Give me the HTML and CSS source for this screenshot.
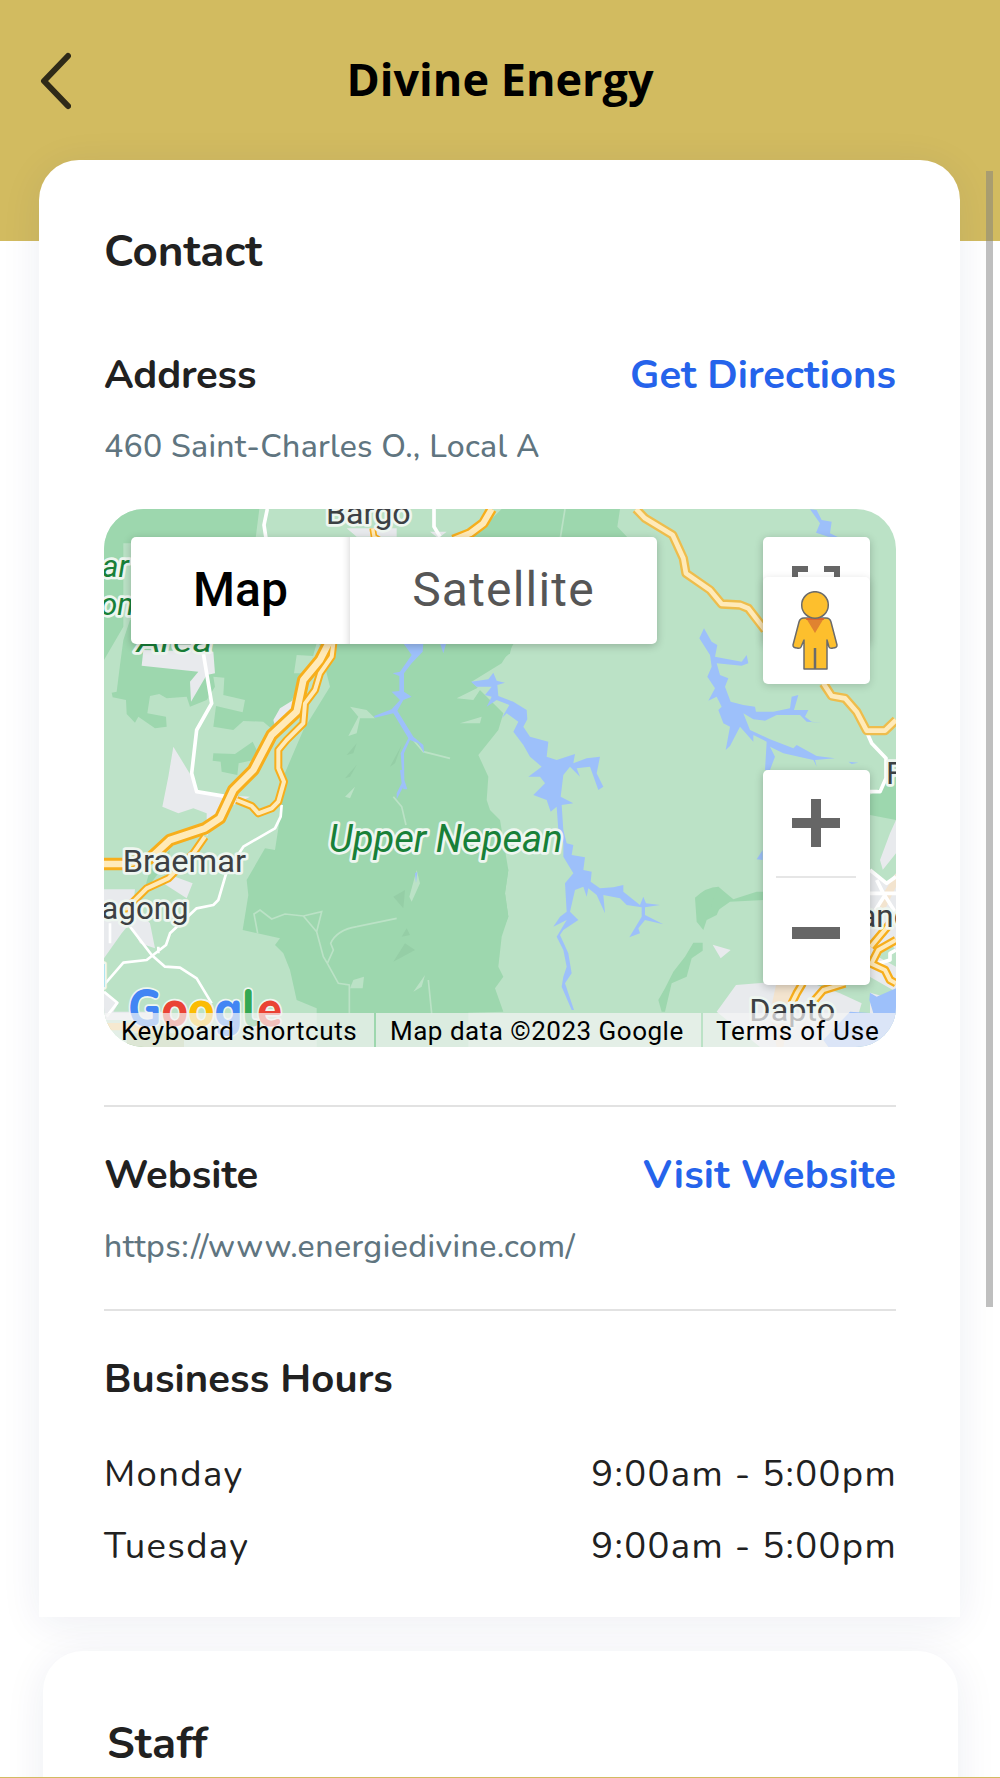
FILE: index.html
```html
<!DOCTYPE html>
<html lang="en">

<head>
    <meta charset="UTF-8">
    <meta name="viewport" content="width=device-width, initial-scale=1.0">
    <title>Divine Energy</title>
    <link rel="stylesheet" href="styles.css">
</head>

<body>
    <header class="header">
        <button class="back" aria-label="Back">
            <svg width="32" height="58" viewBox="0 0 32 58">
                <path d="M29 4 5 29l24 25" fill="none" stroke="#2f2a18" stroke-width="6" stroke-linecap="round" stroke-linejoin="round"/>
            </svg>
        </button>
        <h1>Divine Energy</h1>
    </header>

    <main>
        <section class="card contact">
            <h2>Contact</h2>

            <div class="row address">
                <h3>Address</h3>
                <a class="directions" href="#">Get Directions</a>
            </div>
            <p class="detail street">460 Saint-Charles O., Local A</p>

            <div class="map">
                <svg class="tiles" viewBox="42 27 2376 1614" preserveAspectRatio="none">
                    <rect x="42" y="27" width="2376" height="1614" fill="#bbe2c6"/>
                    <!-- forest -->
                    <g fill="#9dd7ae">
                        <path d="M42 27H508L495 130H100V380L42 480Z"/>
                        <path d="M120 360 100 420 90 495 80 575 65 578 68 592 108 600 110 642 135 668 145 650 195 685 230 680 228 650 172 640 180 588 208 582 230 595 290 590 300 620 350 600 375 560 370 530 403 533 400 585 465 600 458 637 378 618 370 680 430 690 460 663 520 665 560 700 620 640 605 600 660 500 680 430 650 400Z"/>
                        <path d="M370 760 435 762 488 725 512 775 446 790 442 825 395 815 392 785 368 782Z"/>
                        <path d="M680 400H1290L1235 490 1145 545 1240 640 1225 690 1165 765 1195 830 1190 900 1200 930 1230 960 1240 1020 1255 1110 1245 1180 1255 1250 1235 1310 1225 1400 1240 1430 1215 1465 1240 1535 1135 1538V1641H680V1525L620 1500 600 1410 580 1360 555 1335 570 1315 458 1290 475 1185 470 1140 525 1045 555 1050 575 920 580 830 640 690 720 560Z"/>
                        <path d="M1235 27H1590L1582 80 1620 120H1140Z"/>
                        <path d="M1230 1070 1255 1110 1245 1180 1255 1250 1230 1310Z"/>
                        <path d="M1230 440H1265L1260 460 1230 485Z"/>
                        <path d="M1815 1193Q1850 1160 1885 1160L1918 1195 1900 1200 1880 1245 1850 1260 1840 1290 1820 1265ZM1715 1535 1705 1500 1725 1465 1750 1415 1785 1370 1810 1328H1838V1352L1805 1375 1790 1430 1745 1450 1725 1535Z"/>
                        <path d="M1885 1160 1930 1198 2000 1175H2060V1198L1920 1205 1850 1255ZM2340 885 2418 830V960L2340 945Z"/>
                        <path d="M180 1110 240 1050 235 1080 160 1180Z"/>
                    </g>
                    <g fill="#95cea6">
                        <path d="M955 600 1010 545 965 590ZM770 765 800 730 790 760ZM910 1190 945 1170 940 1225ZM910 1385 945 1330 975 1350ZM935 1310 950 1285 960 1305ZM900 800 935 735 915 790ZM765 835 800 795 780 830Z"/>
                    </g>
                    <!-- lighter clearings and tracks -->
                    <g fill="#bbe2c6">
                        <path d="M620 465 670 468 655 520 612 520ZM765 890 795 860 780 895ZM790 1440 822 1430 818 1465 780 1465ZM980 1110 990 1150 965 1205 958 1190ZM970 1475 1005 1425 995 1460ZM1100 595 1180 555 1150 600ZM1110 670 1175 650 1170 670ZM780 620 830 630 855 655 810 655 800 700 775 708 805 650Z"/>
                    </g>
                    <g fill="none" stroke="#bbe2c6" stroke-width="5">
                        <path d="M503 1300 492 1242 510 1230 545 1257 585 1242 640 1248 695 1235 680 1295 640 1248M680 1295 700 1370 712 1390 745 1450 778 1455V1540M712 1390 730 1350 722 1330Q740 1290 800 1280L920 1255M910 890 935 920 948 975M1015 1440 1025 1540M970 720 1000 755 1080 775M1425 27 1410 120"/>
                    </g>
                    <!-- towns -->
                    <g fill="#e8eaed">
                        <path d="M160 450 370 455 375 520 350 525 303 605 300 545 325 515 155 497ZM250 740 305 830 325 880 480 890 400 930 350 1010 350 940 310 925 265 940 217 920 235 830ZM550 660 570 625 610 600 600 660 560 700ZM220 1150 255 1130 308 1150 290 1195ZM42 1168H135L130 1210 180 1270 195 1345 150 1330 120 1270 95 1300 42 1375ZM42 1475 85 1510 70 1535H230V1560H42ZM770 85H920V110H800Z"/>
                        <path d="M1938 1455 2060 1445 2180 1455 2250 1480 2315 1510 2300 1560 2240 1641H2010L1880 1535ZM2370 1080 2400 1000 2418 960V1641H2340V1110L2390 1150ZM1868 1334 1922 1350 1892 1375ZM1020 95 1070 95 1045 115Z"/>
                    </g>
                    <g fill="#f3e4cf">
                        <path d="M2060 1445H2150L2100 1530 2080 1641H2060L2040 1540ZM2380 1180 2418 1120V1160L2350 1300Z"/>
                    </g>
                    <g fill="#bbe2c6">
                        <path d="M2345 1360 2400 1330 2418 1350V1400ZM2330 1425 2418 1475V1500L2330 1475ZM2370 1120 2418 1060V1120L2390 1150Z"/>
                    </g>
                    <!-- rivers and reservoirs -->
                    <g fill="#9dc0fa">
                        <path d="M940 430H1000L998 455 965 490 942 520 942 575 965 590 940 600 922 632 970 710 1000 735 1003 760 985 730 960 720 942 760 943 840 952 868 940 868 932 760 955 715 910 640 855 653 852 648 905 628 930 600 905 575 928 573 928 528 908 520 930 515 965 465ZM1050 430 1068 432 1060 460ZM930 810H940V860L920 898V880L935 850ZM975 1120 982 1115 978 1150Z"/>
                        <path d="M1143 545 1195 538 1210 518 1220 542 1245 548 1222 555 1225 588 1270 605 1310 630 1312 658 1300 680 1320 710 1375 725 1370 770 1400 780 1455 762 1450 790 1490 775 1530 770 1520 820 1540 860 1525 870 1500 800 1460 805 1470 830 1440 800 1420 825 1412 890 1450 910 1415 915 1420 990 1430 1030 1450 1035 1445 1065 1485 1072 1480 1110 1505 1115 1502 1145 1530 1165 1570 1162 1600 1155 1600 1175 1650 1215 1660 1190 1668 1210 1710 1215 1665 1222 1665 1245 1720 1273 1665 1260 1645 1285 1650 1300 1618 1312 1655 1250 1655 1222 1610 1215 1590 1195 1540 1185 1545 1240 1520 1185 1495 1165 1490 1190 1480 1160 1455 1170 1440 1235 1465 1260 1420 1290 1410 1305 1435 1360 1445 1420 1425 1450 1452 1530 1445 1530 1415 1460 1420 1430 1430 1400 1420 1350 1400 1310 1430 1260 1390 1280 1410 1250 1430 1235 1425 1150 1450 1120 1420 1070 1420 1030 1405 990 1400 920 1382 935 1370 900 1330 885 1365 850 1350 830 1315 830 1355 800 1320 770 1300 735 1270 695 1285 665 1250 640 1235 655 1258 615 1220 600 1190 620 1205 590 1185 585 1205 560 1160 560Z"/>
                        <path d="M1842 385 1865 425 1882 435 1875 470 1955 485 1970 465 1975 490 1955 497 1880 490 1890 525 1915 535 1905 560 1922 605 1960 615 1995 620 1998 635 2050 635 2100 625 2105 590 2125 585 2112 630 2155 630 2145 650 2165 665 2195 668 2150 665 2130 645 2100 645 2060 645 2025 662 1990 658 1960 640 1980 690 2040 718 2110 745 2120 735 2180 768 2235 775 2175 780 2180 800 2170 780 2080 760 2040 740 2055 770 2040 810H2025L2030 725 1990 705 1990 725 1950 680 1920 738 1907 750 1920 680 1900 670 1885 630 1895 620 1880 590 1855 602 1875 565 1852 530 1865 500 1860 465 1828 415ZM2160 28 2180 30 2195 60 2225 65 2220 100 2245 112 2215 110 2178 98 2190 70ZM2275 785 2305 788 2285 792ZM2000 1078 2018 1050V1080ZM2338 1500 2340 1478 2360 1490 2418 1465V1641H2215L2200 1620 2280 1535 2350 1540Z"/>
                    </g>
                    <!-- minor roads -->
                    <g fill="none" stroke="#fff" stroke-width="11" stroke-linejoin="round">
                        <path d="M532 27 522 75 528 115M1032 27V80L1050 110M340 460 365 610 320 690 305 820 320 875 410 890" />
                        <path d="M2330 695 2345 730 2388 775V835L2370 875H2335M2340 1110 2390 1150 2418 1130M2340 1180H2418M2380 1180 2360 1140M2380 1180 2418 1240M2350 1240 2385 1185M2418 1350 2400 1360V1380L2350 1395"/>
                    </g>
                    <g fill="none" stroke="#fff" stroke-width="8" stroke-linejoin="round">
                        <path d="M575 915 572 950 555 985 460 1040 410 1115 385 1200 370 1215 320 1225 240 1300 228 1335 170 1380 100 1388 42 1455M60 1270V1330M120 1280 185 1365 225 1400 270 1403 320 1435 365 1510M42 1475 82 1508 50 1550M205 1360V1340"/>
                    </g>
                    <!-- highways -->
                    <g fill="none" stroke="#f7ae1c" stroke-linejoin="round">
                        <path stroke-width="38" d="M718 425 690 480 640 540 620 635 545 705 490 810 430 870 390 955 345 985 240 1020 180 1075 105 1092H42"/>
                        <path stroke-width="24" d="M730 430 725 470 690 520 675 570 645 610 640 670 590 720 565 750V805L582 845 565 905 545 925 505 940 485 918 440 900M345 1010 310 1060 235 1135 170 1165 110 1225 42 1240"/>
                        <path stroke-width="32" d="M1205 27 1180 70 1140 100 1090 120"/>
                        <path stroke-width="20" d="M848 85 852 110 868 120"/>
                        <path stroke-width="28" d="M1638 27 1665 55 1748 105 1780 175 1788 220 1860 270 1895 312 1950 315 1975 325 2025 390M2200 550 2225 588 2265 595 2300 635 2330 692H2385L2418 660" stroke="#eebd4c"/>
                        <path stroke-width="26" d="M2138 1450 2120 1480 2105 1510M2265 1450 2200 1470 2170 1505M2342 1340 2418 1250M2342 1395 2365 1350 2418 1320M2342 1390 2385 1410 2400 1440 2418 1450"/>
                    </g>
                    <g fill="none" stroke="#ffeab9" stroke-linejoin="round">
                        <path stroke-width="20" d="M718 425 690 480 640 540 620 635 545 705 490 810 430 870 390 955 345 985 240 1020 180 1075 105 1092H42"/>
                        <path stroke-width="12" d="M730 430 725 470 690 520 675 570 645 610 640 670 590 720 565 750V805L582 845 565 905 545 925 505 940 485 918 440 900M345 1010 310 1060 235 1135 170 1165 110 1225 42 1240"/>
                        <path stroke-width="18" d="M1205 27 1180 70 1140 100 1090 120"/>
                        <path stroke-width="10" d="M848 85 852 110 868 120"/>
                        <path stroke-width="14" d="M1638 27 1665 55 1748 105 1780 175 1788 220 1860 270 1895 312 1950 315 1975 325 2025 390M2200 550 2225 588 2265 595 2300 635 2330 692H2385L2418 660"/>
                        <path stroke-width="12" d="M2138 1450 2120 1480 2105 1510M2265 1450 2200 1470 2170 1505M2342 1340 2418 1250M2342 1395 2365 1350 2418 1320M2342 1390 2385 1410 2400 1440 2418 1450"/>
                    </g>
                    <path d="M42 1580H110L190 1590" fill="none" stroke="#f7ce7b" stroke-width="22"/>
                    <path d="M110 1600H282V1641H110Z" fill="#a5c48b"/>
                    <!-- labels -->
                    <g class="place">
                        <text x="708" y="72" textLength="254" lengthAdjust="spacingAndGlyphs">Bargo</text>
                        <text x="98" y="1115" textLength="370" lengthAdjust="spacingAndGlyphs">Braemar</text>
                        <text x="34" y="1258" textLength="262" lengthAdjust="spacingAndGlyphs">agong</text>
                        <text x="1978" y="1563" textLength="258" lengthAdjust="spacingAndGlyphs">Dapto</text>
                        <text x="2388" y="853">F</text>
                        <text x="2308" y="1281">and</text>
                        <text x="26" y="1461">l</text>
                    </g>
                    <g class="place park">
                        <text x="36" y="232">ar</text>
                        <text x="30" y="344">on</text>
                        <text x="140" y="456" textLength="228" lengthAdjust="spacingAndGlyphs">Area</text>
                        <text class="nepean" x="716" y="1056" textLength="702" lengthAdjust="spacingAndGlyphs">Upper Nepean</text>
                    </g>
                    <text class="google" x="114" y="1578" textLength="462" lengthAdjust="spacingAndGlyphs"><tspan fill="#4285f4">G</tspan><tspan fill="#ea4335">o</tspan><tspan fill="#fbbc04">o</tspan><tspan fill="#4285f4">g</tspan><tspan fill="#34a853">l</tspan><tspan fill="#ea4335">e</tspan></text>
                </svg>

                <div class="map-type">
                    <button class="active">Map</button>
                    <button>Satellite</button>
                </div>

                <div class="control fullscreen">
                    <svg width="48" height="48" viewBox="0 0 48 48" fill="none" stroke="#666" stroke-width="6">
                        <path d="M3 16V3h13M32 3h13v13M45 32v13H32M16 45H3V32"/>
                    </svg>
                </div>
                <div class="control pegman">
                    <svg width="46" height="80" viewBox="0 0 46 80" stroke="#6b6b6b" stroke-width="1.5" stroke-linejoin="round">
                        <path d="M12 27h22q4 0 5 4l6 23q0 3-4 3-3 1-4-1l-2-7v29H12V49l-3 7q-1 2-4 1-4 0-4-3l6-23q1-4 5-4Z" fill="#fdbf2d"/>
                        <path d="M23 57v21" stroke-width="2.5"/>
                        <path d="m14 27 9 15 9-15Z" fill="#e08330" stroke="none"/>
                        <path d="M14 28h18" stroke="#dd5b2c"/>
                        <circle cx="23" cy="14" r="13.3" fill="#fdbf2d"/>
                    </svg>
                </div>
                <div class="control zoom">
                    <svg width="48" height="48" viewBox="0 0 48 48"><path d="M19 0h10v19h19v10H29v19H19V29H0V19h19Z" fill="#666"/></svg>
                    <hr>
                    <svg width="48" height="12" viewBox="0 0 48 12"><path d="M0 0h48v12H0Z" fill="#666"/></svg>
                </div>

                <div class="attribution">
                    <span class="shortcuts">Keyboard shortcuts</span>
                    <span class="data">Map data ©2023 Google</span>
                    <span class="terms">Terms of Use</span>
                </div>
            </div>

            <div class="row website">
                <h3>Website</h3>
                <a class="visit" href="#">Visit Website</a>
            </div>
            <p class="detail url">https://www.energiedivine.com/</p>

            <h3 class="hours-title">Business Hours</h3>
            <div class="row hours">
                <span>Monday</span>
                <span class="time">9:00am - 5:00pm</span>
            </div>
            <div class="row hours">
                <span>Tuesday</span>
                <span class="time">9:00am - 5:00pm</span>
            </div>
        </section>

        <section class="card staff">
            <h2>Staff</h2>
        </section>
    </main>

    <div class="scrollbar"></div>
</body>

</html>
```

FILE: styles.css
```css
* {
    box-sizing: border-box;
}

body {
    margin: 0;
    height: 1778px;
    overflow: hidden;
    position: relative;
    background-color: #fff;
    color: #212121;
    font-family: Nunito, Lato, sans-serif;
    border-bottom: 1px solid #d2bb60;
}

h1, h2, h3, p {
    margin: 0;
}

button {
    border: none;
    background: none;
    padding: 0;
    font-family: inherit;
}

.header {
    display: grid;
    grid-template-columns: 100px 1fr 100px;
    align-items: center;
    height: 241px;
    padding-bottom: 79px;
    background-color: #d2bb60;
}

.header h1 {
    padding-bottom: 4px;
    font-family: "Open Sans", sans-serif;
    font-size: 45px;
    line-height: 60px;
    font-weight: 700;
    color: #000;
    text-align: center;
    white-space: nowrap;
}

.back {
    display: flex;
    padding-left: 39px;
}

main {
    margin-top: -81px;
}

.card {
    background-color: #fff;
    box-shadow: 0 6px 40px rgba(30, 35, 100, 0.08);
}

.contact {
    height: 1457px;
    margin: 0 40px 0 39px;
    padding: 64px 64px 0 65px;
    border-radius: 40px 40px 0 0;
}

h2 {
    font-size: 44px;
    line-height: 56px;
    font-weight: 700;
}

h3, .row a {
    font-size: 40px;
    line-height: 50px;
    font-weight: 700;
}

.row {
    display: flex;
    justify-content: space-between;
    white-space: nowrap;
}

.row a {
    color: #2563eb;
    text-decoration: none;
}

.address {
    margin-top: 70px;
}

.address h3 {
    letter-spacing: -0.2px;
}

.detail {
    font-size: 32px;
    line-height: 40px;
    font-weight: 500;
    color: #607580;
    white-space: nowrap;
}

.street {
    margin-top: 27px;
    letter-spacing: 0.27px;
}

.map {
    position: relative;
    height: 538px;
    margin-top: 42px;
    border-radius: 40px;
    overflow: hidden;
    font-family: Roboto, sans-serif;
}

.tiles {
    display: block;
    width: 100%;
    height: 100%;
}

.place {
    font-size: 94px;
    fill: #3c4043;
    stroke: #eef6f0;
    stroke-width: 16px;
    stroke-linejoin: round;
    paint-order: stroke;
}

.park {
    fill: #188038;
    font-style: italic;
}

.nepean {
    font-size: 114px;
}

.google {
    font-family: Nunito, Lato, sans-serif;
    font-size: 152px;
    font-weight: 800;
    stroke: #eef6f0;
    stroke-width: 10px;
    paint-order: stroke;
}

.map-type {
    position: absolute;
    left: 27px;
    top: 28px;
    display: flex;
    width: 526px;
    height: 107px;
    border-radius: 5px;
    background-color: #fff;
    box-shadow: 0 2px 8px rgba(0, 0, 0, 0.22);
}

.map-type button {
    flex: 1;
    padding-bottom: 2px;
    font-size: 48px;
    color: #565656;
    letter-spacing: 1.2px;
}

.map-type .active {
    flex: none;
    width: 219px;
    font-weight: 500;
    color: #000;
    letter-spacing: 0;
    box-shadow: inset -8px 0 8px -8px rgba(0, 0, 0, 0.2);
}

.control {
    position: absolute;
    left: 659px;
    width: 107px;
    height: 107px;
    display: flex;
    flex-direction: column;
    align-items: center;
    border-radius: 5px;
    background-color: #fff;
    box-shadow: 0 2px 8px rgba(0, 0, 0, 0.22);
}

.fullscreen {
    top: 28px;
    padding: 29px 2px 0 0;
}

.pegman {
    top: 68px;
    padding: 14px 4px 0 0;
    box-shadow: 0 2px 8px rgba(0, 0, 0, 0.15);
}

.zoom {
    top: 261px;
    height: 215px;
    padding: 29px 2px 0 0;
}

.zoom hr {
    width: 80px;
    height: 2px;
    margin: 29px 0 49px;
    border: none;
    background-color: #e6e6e6;
}

.attribution {
    position: absolute;
    left: 0;
    right: 0;
    bottom: 0;
    display: flex;
    gap: 2px;
    height: 34px;
    font-size: 26px;
    line-height: 37px;
    letter-spacing: 0.6px;
    color: #000;
    white-space: nowrap;
}

.attribution span {
    background-color: rgba(245, 245, 245, 0.7);
}

.shortcuts {
    width: 270px;
    padding-left: 17px;
}

.data {
    width: 325px;
    padding-left: 14px;
    letter-spacing: 0.5px;
}

.terms {
    flex: 1;
    padding-left: 13px;
    letter-spacing: 0.8px;
}

.website {
    margin-top: 58px;
    padding-top: 43px;
    border-top: 2px solid #e2e2e2;
}

.visit {
    letter-spacing: 0.15px;
}

.url {
    margin-top: 27px;
    letter-spacing: 0.45px;
}

.hours-title {
    margin-top: 42px;
    padding-top: 43px;
    border-top: 2px solid #e2e2e2;
    letter-spacing: 0.1px;
}

.hours {
    font-size: 36.5px;
    line-height: 44px;
    margin-top: 28px;
    letter-spacing: 1.35px;
}

.hours-title + .hours {
    margin-top: 48px;
}

.time {
    margin-right: -1px;
}

.staff {
    height: 200px;
    margin: 34px 42px 0 43px;
    padding: 65px 64px 0;
    border-radius: 40px 40px 0 0;
}

.staff h2 {
    letter-spacing: 0.3px;
}

.scrollbar {
    position: absolute;
    top: 171px;
    left: 986px;
    width: 7px;
    height: 1136px;
    background-color: rgba(127, 127, 127, 0.5);
}
```
